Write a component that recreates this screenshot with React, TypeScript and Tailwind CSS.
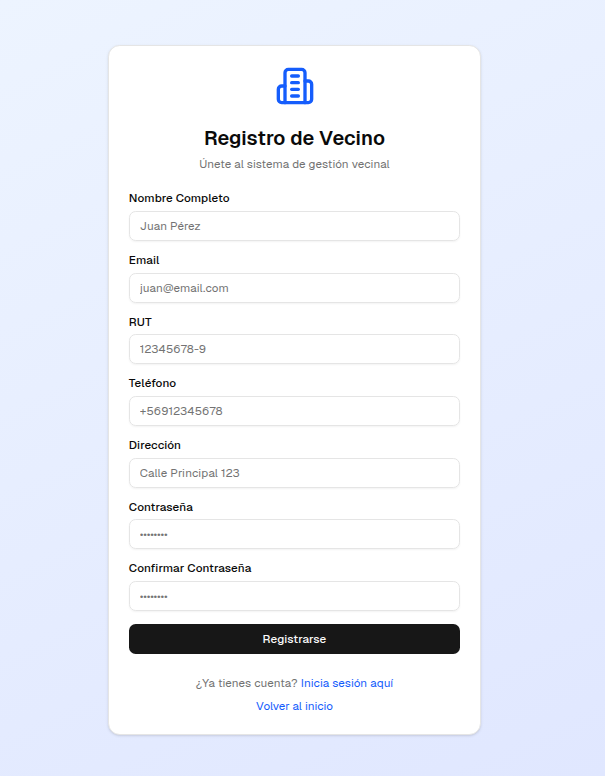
import React from "react";

const fields = [
  { id: "name", label: "Nombre Completo", placeholder: "Juan Pérez", type: "text" },
  { id: "email", label: "Email", placeholder: "juan@email.com", type: "email" },
  { id: "rut", label: "RUT", placeholder: "12345678-9", type: "text" },
  { id: "phone", label: "Teléfono", placeholder: "+56912345678", type: "tel" },
  { id: "address", label: "Dirección", placeholder: "Calle Principal 123", type: "text" },
  { id: "password", label: "Contraseña", placeholder: "••••••••", type: "password" },
  { id: "confirm", label: "Confirmar Contraseña", placeholder: "••••••••", type: "password" },
];

function BuildingIcon() {
  return (
    <svg className="ml-px size-10 text-[#155dfc]" viewBox="0 0 24 24" fill="none" stroke="currentColor" strokeWidth="2" strokeLinecap="round" strokeLinejoin="round">
      <path d="M6 22V4a2 2 0 0 1 2-2h8a2 2 0 0 1 2 2v18Z" />
      <path d="M6 12H4a2 2 0 0 0-2 2v6a2 2 0 0 0 2 2h2" />
      <path d="M18 9h2a2 2 0 0 1 2 2v9a2 2 0 0 1-2 2h-2" />
      <path d="M10 6h4" />
      <path d="M10 10h4" />
      <path d="M10 14h4" />
      <path d="M10 18h4" />
    </svg>
  );
}

export default function App() {
  return (
    <div className="flex h-[776px] items-start justify-center bg-[linear-gradient(155deg,#edf4ff,#e0e7ff)] pt-[45px] pr-4 font-['Geist','Inter','Liberation_Sans',sans-serif] text-[11.67px] text-[#0a0a0a]">
      <main className="h-[690px] w-[373.33px] rounded-[11.67px] border border-[#e5e5e5] bg-white px-5 pt-5 shadow-sm">
        <header className="flex flex-col items-center">
          <BuildingIcon />
          <h1 className="mt-[18px] text-[20px] leading-[28px] font-semibold tracking-[0.05px] whitespace-nowrap">Registro de Vecino</h1>
          <p className="mt-[3px] leading-[17px] tracking-[0.07px] whitespace-nowrap text-[#737373]">Únete al sistema de gestión vecinal</p>
        </header>
        <form className="mt-[20.4px] flex flex-col gap-[13.18px]">
          {fields.map((f) => (
            <div key={f.id} className="flex flex-col gap-[6.82px]">
              <label htmlFor={f.id} className="w-fit leading-[11.67px] font-medium tracking-[0.1px]">{f.label}</label>
              <input
                id={f.id}
                type={f.type}
                placeholder={f.placeholder}
                className={
                  f.type === "password"
                    ? "h-[30px] w-full rounded-[6.67px] border border-[#e5e5e5] px-[10px] pb-px tracking-[-0.2px] shadow-xs outline-none placeholder:text-[#737373]"
                    : "h-[30px] w-full rounded-[6.67px] border border-[#e5e5e5] px-[10px] pb-[0.5px] tracking-[0.1px] shadow-xs outline-none placeholder:text-[#737373]"
                }
              />
            </div>
          ))}
          <button type="button" className="h-[30px] w-full rounded-[6.67px] bg-[#171717] font-medium tracking-[0.1px] text-[#fafafa]">Registrarse</button>
        </form>
        <footer className="mt-[19.6px] flex flex-col items-center gap-[6px] leading-[17px] tracking-[0.09px]">
          <p className="whitespace-nowrap text-[#737373]">
            ¿Ya tienes cuenta? <a className="text-[#155dfc]">Inicia sesión aquí</a>
          </p>
          <a className="tracking-normal text-[#155dfc]">Volver al inicio</a>
        </footer>
      </main>
    </div>
  );
}
